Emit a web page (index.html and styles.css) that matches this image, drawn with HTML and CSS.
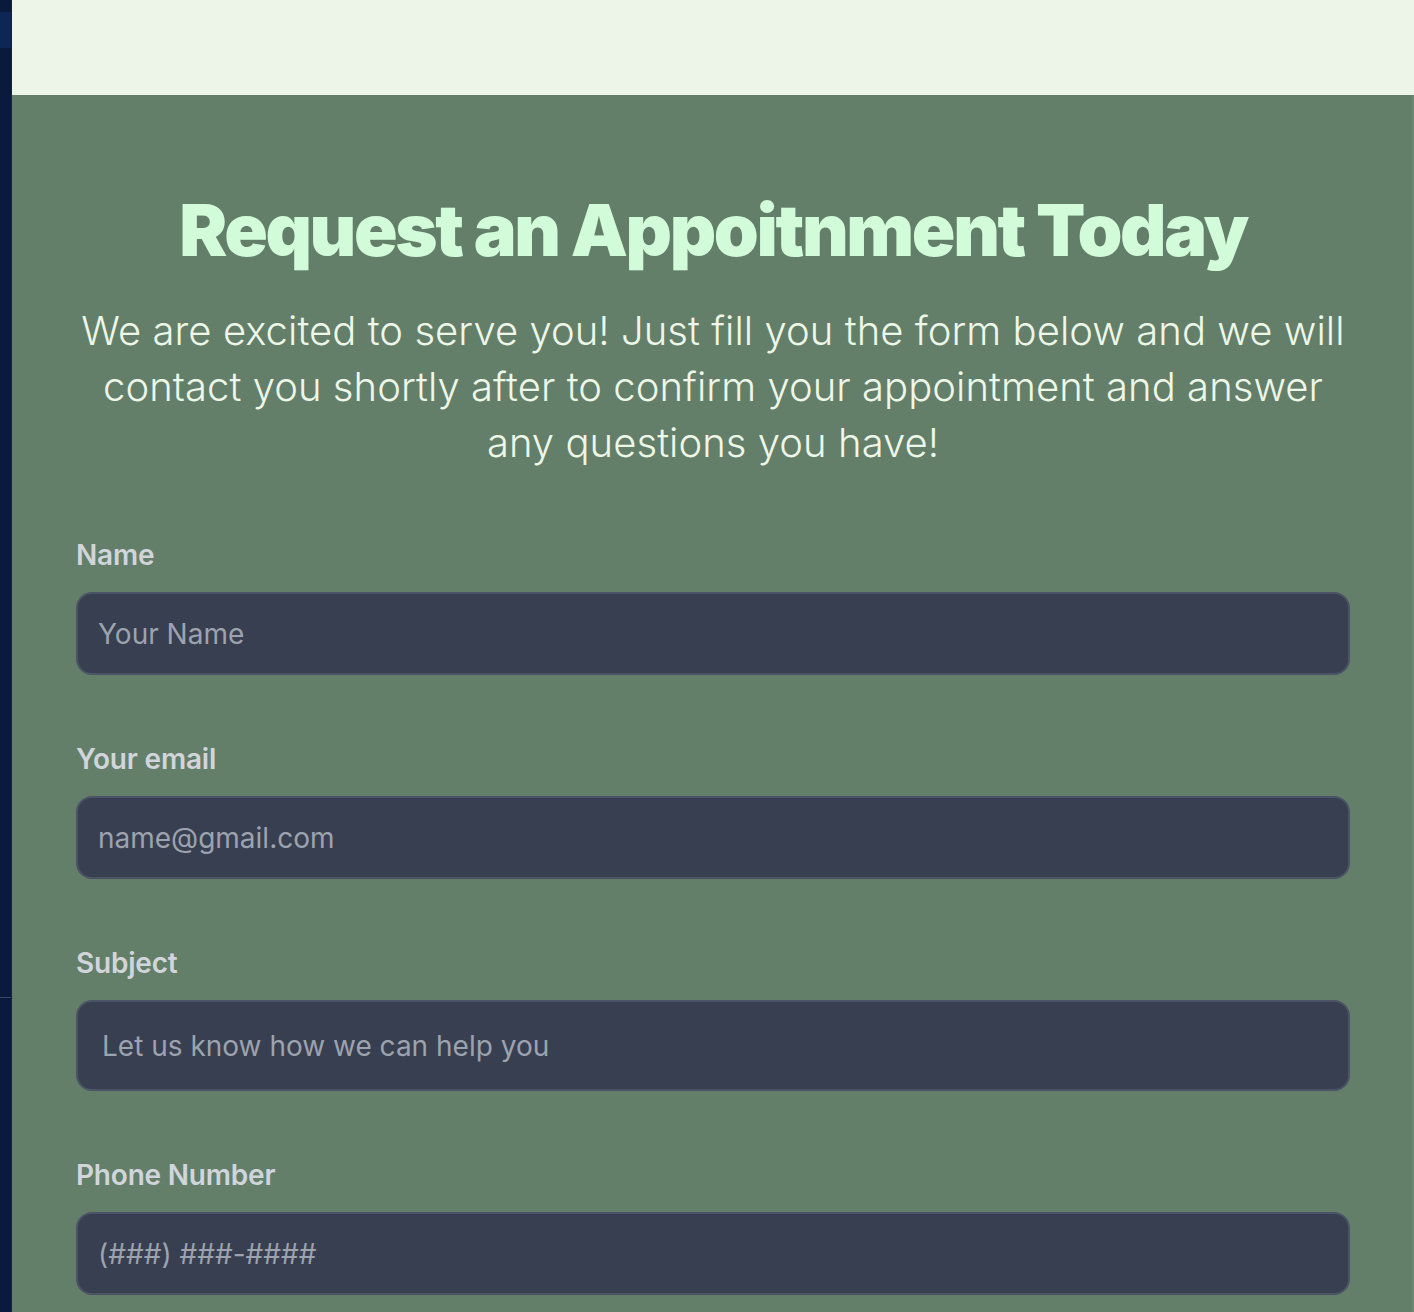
FILE: index.html
```html
<!DOCTYPE html>
<html lang="en">
<head>
<meta charset="utf-8">
<title>Request an Appointment</title>
<link rel="stylesheet" href="styles.css">
</head>
<body>
<div class="page">
  <aside class="side">
    <div class="side-tab"></div>
    <div class="side-rule"></div>
  </aside>
  <main class="main">
    <div class="topband"></div>
    <section class="contact">
      <h1 class="title">Request an Appoitnment Today</h1>
      <p class="lead">We are excited to serve you! Just fill you the form below and we will contact you shortly after to confirm your appointment and answer any questions you have!</p>
      <form class="form">
        <div class="field">
          <label class="label" for="name">Name</label>
          <input class="input" id="name" type="text" placeholder="Your Name">
        </div>
        <div class="field">
          <label class="label" for="email">Your email</label>
          <input class="input" id="email" type="email" placeholder="name@gmail.com">
        </div>
        <div class="field">
          <label class="label" for="subject">Subject</label>
          <input class="input input-lg" id="subject" type="text" placeholder="Let us know how we can help you">
        </div>
        <div class="field">
          <label class="label" for="phone">Phone Number</label>
          <input class="input" id="phone" type="tel" placeholder="(###) ###-####">
        </div>
      </form>
    </section>
  </main>
</div>
</body>
</html>
```
FILE: styles.css
```css
* { box-sizing: border-box; }
html, body { margin: 0; padding: 0; }
body {
  font-family: Inter, "Noto Sans", sans-serif;
  background: #637f69;
  overflow: hidden;
}
.page {
  display: flex;
  min-height: 1312px;
}
.side {
  width: 12px;
  flex: none;
  background: #0a1a3c;
  border-right: 1px solid #16223a;
  display: flex;
  flex-direction: column;
}
.side-tab {
  margin-top: 12px;
  height: 36px;
  background: #0d2655;
}
.side-rule {
  margin-top: 949px;
  height: 1px;
  background: #3a4a5e;
}
.main {
  flex: 1;
  display: flex;
  flex-direction: column;
}
.topband {
  height: 95px;
  background: #edf5e9;
}
.contact {
  flex: 1;
  background: #637f69;
  border-right: 2px solid #6c8772;
  padding: 95px 62px 0 64px;
}
.title {
  margin: 0;
  text-align: center;
  font-size: 72px;
  line-height: 80px;
  font-weight: 900;
  letter-spacing: -2.35px;
  color: #d2fbda;
}
.lead {
  margin: 33px 0 0;
  text-align: center;
  font-size: 40px;
  line-height: 56px;
  font-weight: 300;
  letter-spacing: 0.05px;
  color: #eef6e8;
}
.form {
  margin-top: 64px;
  display: flex;
  flex-direction: column;
  gap: 64px;
}
.field {
  display: flex;
  flex-direction: column;
  gap: 17px;
}
.label {
  font-size: 28px;
  line-height: 40px;
  font-weight: 600;
  letter-spacing: -0.2px;
  color: #d1d5db;
}
.input {
  display: block;
  width: 100%;
  height: 83px;
  padding: 0 20px;
  font-family: Inter, "Noto Sans", sans-serif;
  font-size: 28px;
  color: #e5e7eb;
  background: #383f50;
  border: 2px solid #4b5466;
  border-radius: 16px;
  outline: none;
}
.input-lg {
  height: 91px;
  padding: 0 24px;
}
.input::placeholder {
  color: #9ca3af;
}
```
